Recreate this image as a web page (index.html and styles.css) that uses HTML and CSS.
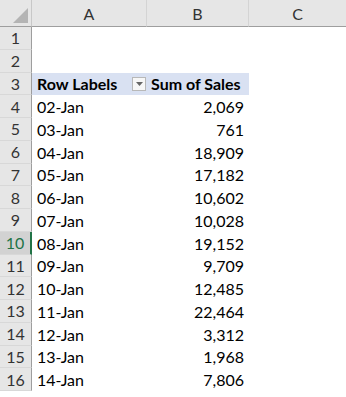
FILE: index.html
```html
<!DOCTYPE html>
<html>
<head>
<meta charset="utf-8">
<link rel="stylesheet" href="styles.css">
</head>
<body>
<div class="sheet">
  <div class="corner"><span class="tri"></span></div>
  <div class="colhead">A</div>
  <div class="colhead">B</div>
  <div class="colhead last">C</div>

  <div class="rowhead">1</div><div class="cell"></div><div class="cell"></div><div class="cell"></div>
  <div class="rowhead">2</div><div class="cell"></div><div class="cell"></div><div class="cell"></div>
  <div class="rowhead">3</div>
  <div class="cell pvh labels"><span>Row Labels</span><span class="dd"><svg width="7" height="4" viewBox="0 0 7 4"><path d="M0 0H7L3.5 4Z" fill="#666"/></svg></span></div>
  <div class="cell pvh">Sum of Sales</div>
  <div class="cell"></div>

  <div class="rowhead">4</div><div class="cell">02-Jan</div><div class="cell num">2,069</div><div class="cell"></div>
  <div class="rowhead">5</div><div class="cell">03-Jan</div><div class="cell num">761</div><div class="cell"></div>
  <div class="rowhead">6</div><div class="cell">04-Jan</div><div class="cell num">18,909</div><div class="cell"></div>
  <div class="rowhead">7</div><div class="cell">05-Jan</div><div class="cell num">17,182</div><div class="cell"></div>
  <div class="rowhead">8</div><div class="cell">06-Jan</div><div class="cell num">10,602</div><div class="cell"></div>
  <div class="rowhead">9</div><div class="cell">07-Jan</div><div class="cell num">10,028</div><div class="cell"></div>
  <div class="rowhead sel">10</div><div class="cell">08-Jan</div><div class="cell num">19,152</div><div class="cell"></div>
  <div class="rowhead">11</div><div class="cell">09-Jan</div><div class="cell num">9,709</div><div class="cell"></div>
  <div class="rowhead">12</div><div class="cell">10-Jan</div><div class="cell num">12,485</div><div class="cell"></div>
  <div class="rowhead">13</div><div class="cell">11-Jan</div><div class="cell num">22,464</div><div class="cell"></div>
  <div class="rowhead">14</div><div class="cell">12-Jan</div><div class="cell num">3,312</div><div class="cell"></div>
  <div class="rowhead">15</div><div class="cell">13-Jan</div><div class="cell num">1,968</div><div class="cell"></div>
  <div class="rowhead">16</div><div class="cell">14-Jan</div><div class="cell num">7,806</div><div class="cell"></div>
</div>
</body>
</html>
```
FILE: styles.css
```css
html, body {
  margin: 0;
  padding: 0;
  background: #ffffff;
}
.sheet {
  display: grid;
  grid-template-columns: 32px 115px 102px 97px;
  grid-template-rows: 27px repeat(16, 22.75px);
  font-family: "Lato", "Liberation Sans", sans-serif;
  font-size: 16px;
  color: #000;
  width: 346px;
}
.corner {
  background: #e6e6e6;
  border-bottom: 1px solid #9e9e9e;
  border-right: 1px solid #c8c8c8;
  position: relative;
  box-sizing: border-box;
}
.tri {
  position: absolute;
  right: 3px;
  bottom: 3px;
  width: 0;
  height: 0;
  border-left: 15px solid transparent;
  border-bottom: 15px solid #b4b4b4;
}
.colhead {
  background: #e6e6e6;
  border-bottom: 1px solid #9e9e9e;
  border-right: 1px solid #d4d4d4;
  box-sizing: border-box;
  display: flex;
  align-items: center;
  justify-content: center;
  color: #333;
  padding-top: 1px;
}
.colhead.last {
  border-right: none;
}
.rowhead {
  background: #e6e6e6;
  border-right: 1px solid #9e9e9e;
  border-bottom: 1px solid #d8d8d8;
  box-sizing: border-box;
  display: flex;
  align-items: center;
  justify-content: center;
  color: #333;
}
.rowhead.sel {
  background: #d2d2d2;
  border-right: 2px solid #217346;
  color: #217346;
}
.cell {
  display: flex;
  align-items: center;
  padding: 0 5px;
  box-sizing: border-box;
  white-space: nowrap;
  overflow: hidden;
}
.num {
  justify-content: flex-end;
}
.pvh {
  background: #d9e1f2;
  font-weight: bold;
  padding-left: 4px;
}
.labels {
  padding-left: 5px;
  justify-content: space-between;
}
.dd {
  width: 14px;
  height: 14px;
  box-sizing: border-box;
  border: 1px solid #b8b8b8;
  background: #f7f7f7;
  display: flex;
  align-items: center;
  justify-content: center;
  margin-right: -4px;
}
```
